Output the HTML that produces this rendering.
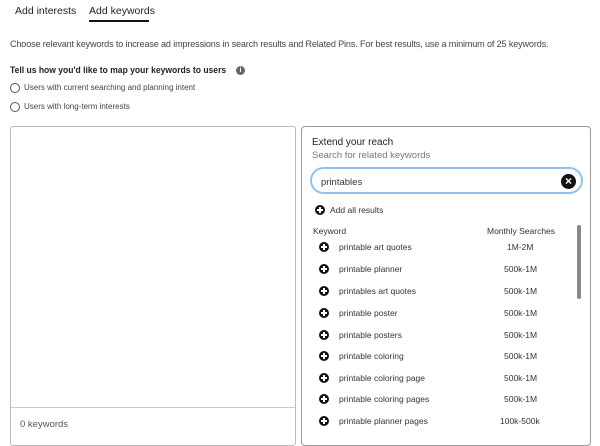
<!DOCTYPE html>
<html><head><style>
*{margin:0;padding:0;box-sizing:border-box}
body{width:600px;height:435px;overflow:hidden;background:#fff;font-family:"Liberation Sans",sans-serif;color:#222;position:relative}
.a{position:absolute;white-space:nowrap}
.plus{position:absolute;width:10px;height:10px;border-radius:50%;background:#111}
.plus:before{content:"";position:absolute;left:2px;top:4.2px;width:6px;height:1.6px;background:#fff}
.plus:after{content:"";position:absolute;left:4.2px;top:2px;width:1.6px;height:6px;background:#fff}
.radio{position:absolute;width:10px;height:10px;border:1px solid #555;border-radius:50%}
.kw{font-size:8.5px;color:#333}
</style></head><body>
<div class="a" style="left:15px;top:5px;font-size:10.5px">Add interests</div>
<div class="a" style="left:89px;top:5px;font-size:10.5px">Add keywords</div>
<div class="a" style="left:89px;top:20px;width:60px;height:2px;background:#111"></div>
<div class="a" style="left:10px;top:39px;font-size:9.5px;color:#444;letter-spacing:-0.15px;transform:scaleX(0.955);transform-origin:0 0">Choose relevant keywords to increase ad impressions in search results and Related Pins. For best results, use a minimum of 25 keywords.</div>
<div class="a" style="left:10px;top:65px;font-size:9px;font-weight:bold;color:#222;transform:scaleX(0.95);transform-origin:0 0">Tell us how you'd like to map your keywords to users</div>
<div class="a" style="left:236px;top:66px;width:9px;height:9px;border-radius:50%;background:#666;color:#fff;font-size:7px;text-align:center;line-height:9px;font-weight:bold">i</div>
<div class="radio" style="left:10px;top:83px"></div>
<div class="a" style="left:24px;top:83px;font-size:8px;color:#444">Users with current searching and planning intent</div>
<div class="radio" style="left:10px;top:102px"></div>
<div class="a" style="left:24px;top:102px;font-size:8px;color:#444">Users with long-term interests</div>

<div class="a" style="left:10px;top:126px;width:286px;height:320px;border:1px solid #bbb;border-radius:3px"></div>
<div class="a" style="left:11px;top:407px;width:284px;height:1px;background:#ccc"></div>
<div class="a" style="left:20px;top:419px;font-size:9.5px;color:#555">0 keywords</div>

<div class="a" style="left:301px;top:126px;width:290px;height:320px;border:1px solid #999;border-radius:4px"></div>
<div class="a" style="left:312px;top:137px;font-size:10px;color:#222">Extend your reach</div>
<div class="a" style="left:312px;top:150px;font-size:9.5px;color:#777">Search for related keywords</div>
<div class="a" style="left:310px;top:167px;width:273px;height:27px;border:2px solid #8ec3ef;border-radius:14px"></div>
<div class="a" style="left:321px;top:177px;font-size:9.5px;color:#333">printables</div>
<div class="a" style="left:561px;top:174px;width:15px;height:15px;border-radius:50%;background:#111;color:#fff;font-size:12px;line-height:14px;text-align:center;font-weight:bold">×</div>
<div class="plus" style="left:315px;top:205px"></div>
<div class="a" style="left:330px;top:205px;font-size:8.5px;color:#333">Add all results</div>
<div class="a" style="left:313px;top:226px;font-size:8.5px;color:#333">Keyword</div>
<div class="a" style="left:487px;top:226px;font-size:8.5px;color:#333">Monthly Searches</div>
<div class="a" style="left:577px;top:225px;width:4px;height:74px;border-radius:2px;background:#888"></div>

<div class="plus" style="left:319px;top:242px"></div><div class="a kw" style="left:339px;top:242px">printable art quotes</div><div class="a kw" style="left:507px;top:242px">1M-2M</div>
<div class="plus" style="left:319px;top:264px"></div><div class="a kw" style="left:339px;top:264px">printable planner</div><div class="a kw" style="left:504px;top:264px">500k-1M</div>
<div class="plus" style="left:319px;top:286px"></div><div class="a kw" style="left:339px;top:286px">printables art quotes</div><div class="a kw" style="left:504px;top:286px">500k-1M</div>
<div class="plus" style="left:319px;top:308px"></div><div class="a kw" style="left:339px;top:308px">printable poster</div><div class="a kw" style="left:504px;top:308px">500k-1M</div>
<div class="plus" style="left:319px;top:330px"></div><div class="a kw" style="left:339px;top:330px">printable posters</div><div class="a kw" style="left:504px;top:330px">500k-1M</div>
<div class="plus" style="left:319px;top:351px"></div><div class="a kw" style="left:339px;top:351px">printable coloring</div><div class="a kw" style="left:504px;top:351px">500k-1M</div>
<div class="plus" style="left:319px;top:373px"></div><div class="a kw" style="left:339px;top:373px">printable coloring page</div><div class="a kw" style="left:504px;top:373px">500k-1M</div>
<div class="plus" style="left:319px;top:394px"></div><div class="a kw" style="left:339px;top:394px">printable coloring pages</div><div class="a kw" style="left:504px;top:394px">500k-1M</div>
<div class="plus" style="left:319px;top:416px"></div><div class="a kw" style="left:339px;top:416px">printable planner pages</div><div class="a kw" style="left:500px;top:416px">100k-500k</div>
</body></html>
